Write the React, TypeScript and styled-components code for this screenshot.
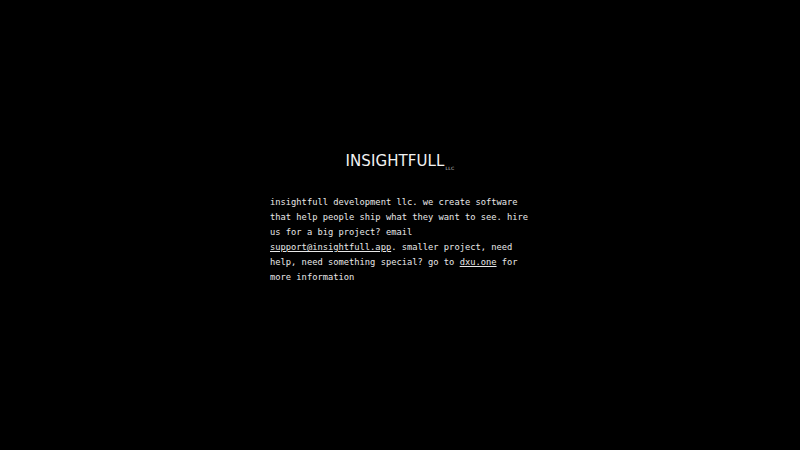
import React from 'react';
import styled, { createGlobalStyle } from 'styled-components';

const GlobalStyle = createGlobalStyle`
  html, body {
    margin: 0;
    padding: 0;
    background: #000;
  }
  #root {
    min-height: 100vh;
  }
`;

const Page = styled.main`
  min-height: 450px;
  background: #000;
  display: flex;
  flex-direction: column;
  align-items: center;
  padding-top: 151px;
  box-sizing: border-box;
`;

const Brand = styled.h1`
  margin: 0 0 24px;
  display: flex;
  align-items: flex-end;
  font-family: 'DejaVu Sans', sans-serif;
  font-weight: 400;
  font-size: 15px;
  line-height: 20px;
  color: #f2f2f2;
  letter-spacing: 0.1px;
`;

const Suffix = styled.span`
  font-size: 4.5px;
  line-height: 6px;
  margin-left: 1px;
  margin-bottom: -1px;
  color: #cfcfcf;
  letter-spacing: 0.3px;
`;

const Blurb = styled.p`
  margin: 0;
  width: 260px;
  font-family: 'DejaVu Sans Mono', monospace;
  font-size: 8.75px;
  line-height: 15px;
  color: #e8e8e8;
`;

const Link = styled.a`
  color: inherit;
  text-decoration: underline;
  text-underline-offset: 1px;
`;

export default function App() {
  return (
    <>
      <GlobalStyle />
      <Page>
        <Brand>
          INSIGHTFULL
          <Suffix>LLC</Suffix>
        </Brand>
        <Blurb>
          insightfull development llc. we create software that help people ship
          what they want to see. hire us for a big project? email{' '}
          <Link href="mailto:support@insightfull.app">support@insightfull.app</Link>.
          smaller project, need help, need something special? go to{' '}
          <Link href="#">dxu.one</Link> for more information
        </Blurb>
      </Page>
    </>
  );
}
